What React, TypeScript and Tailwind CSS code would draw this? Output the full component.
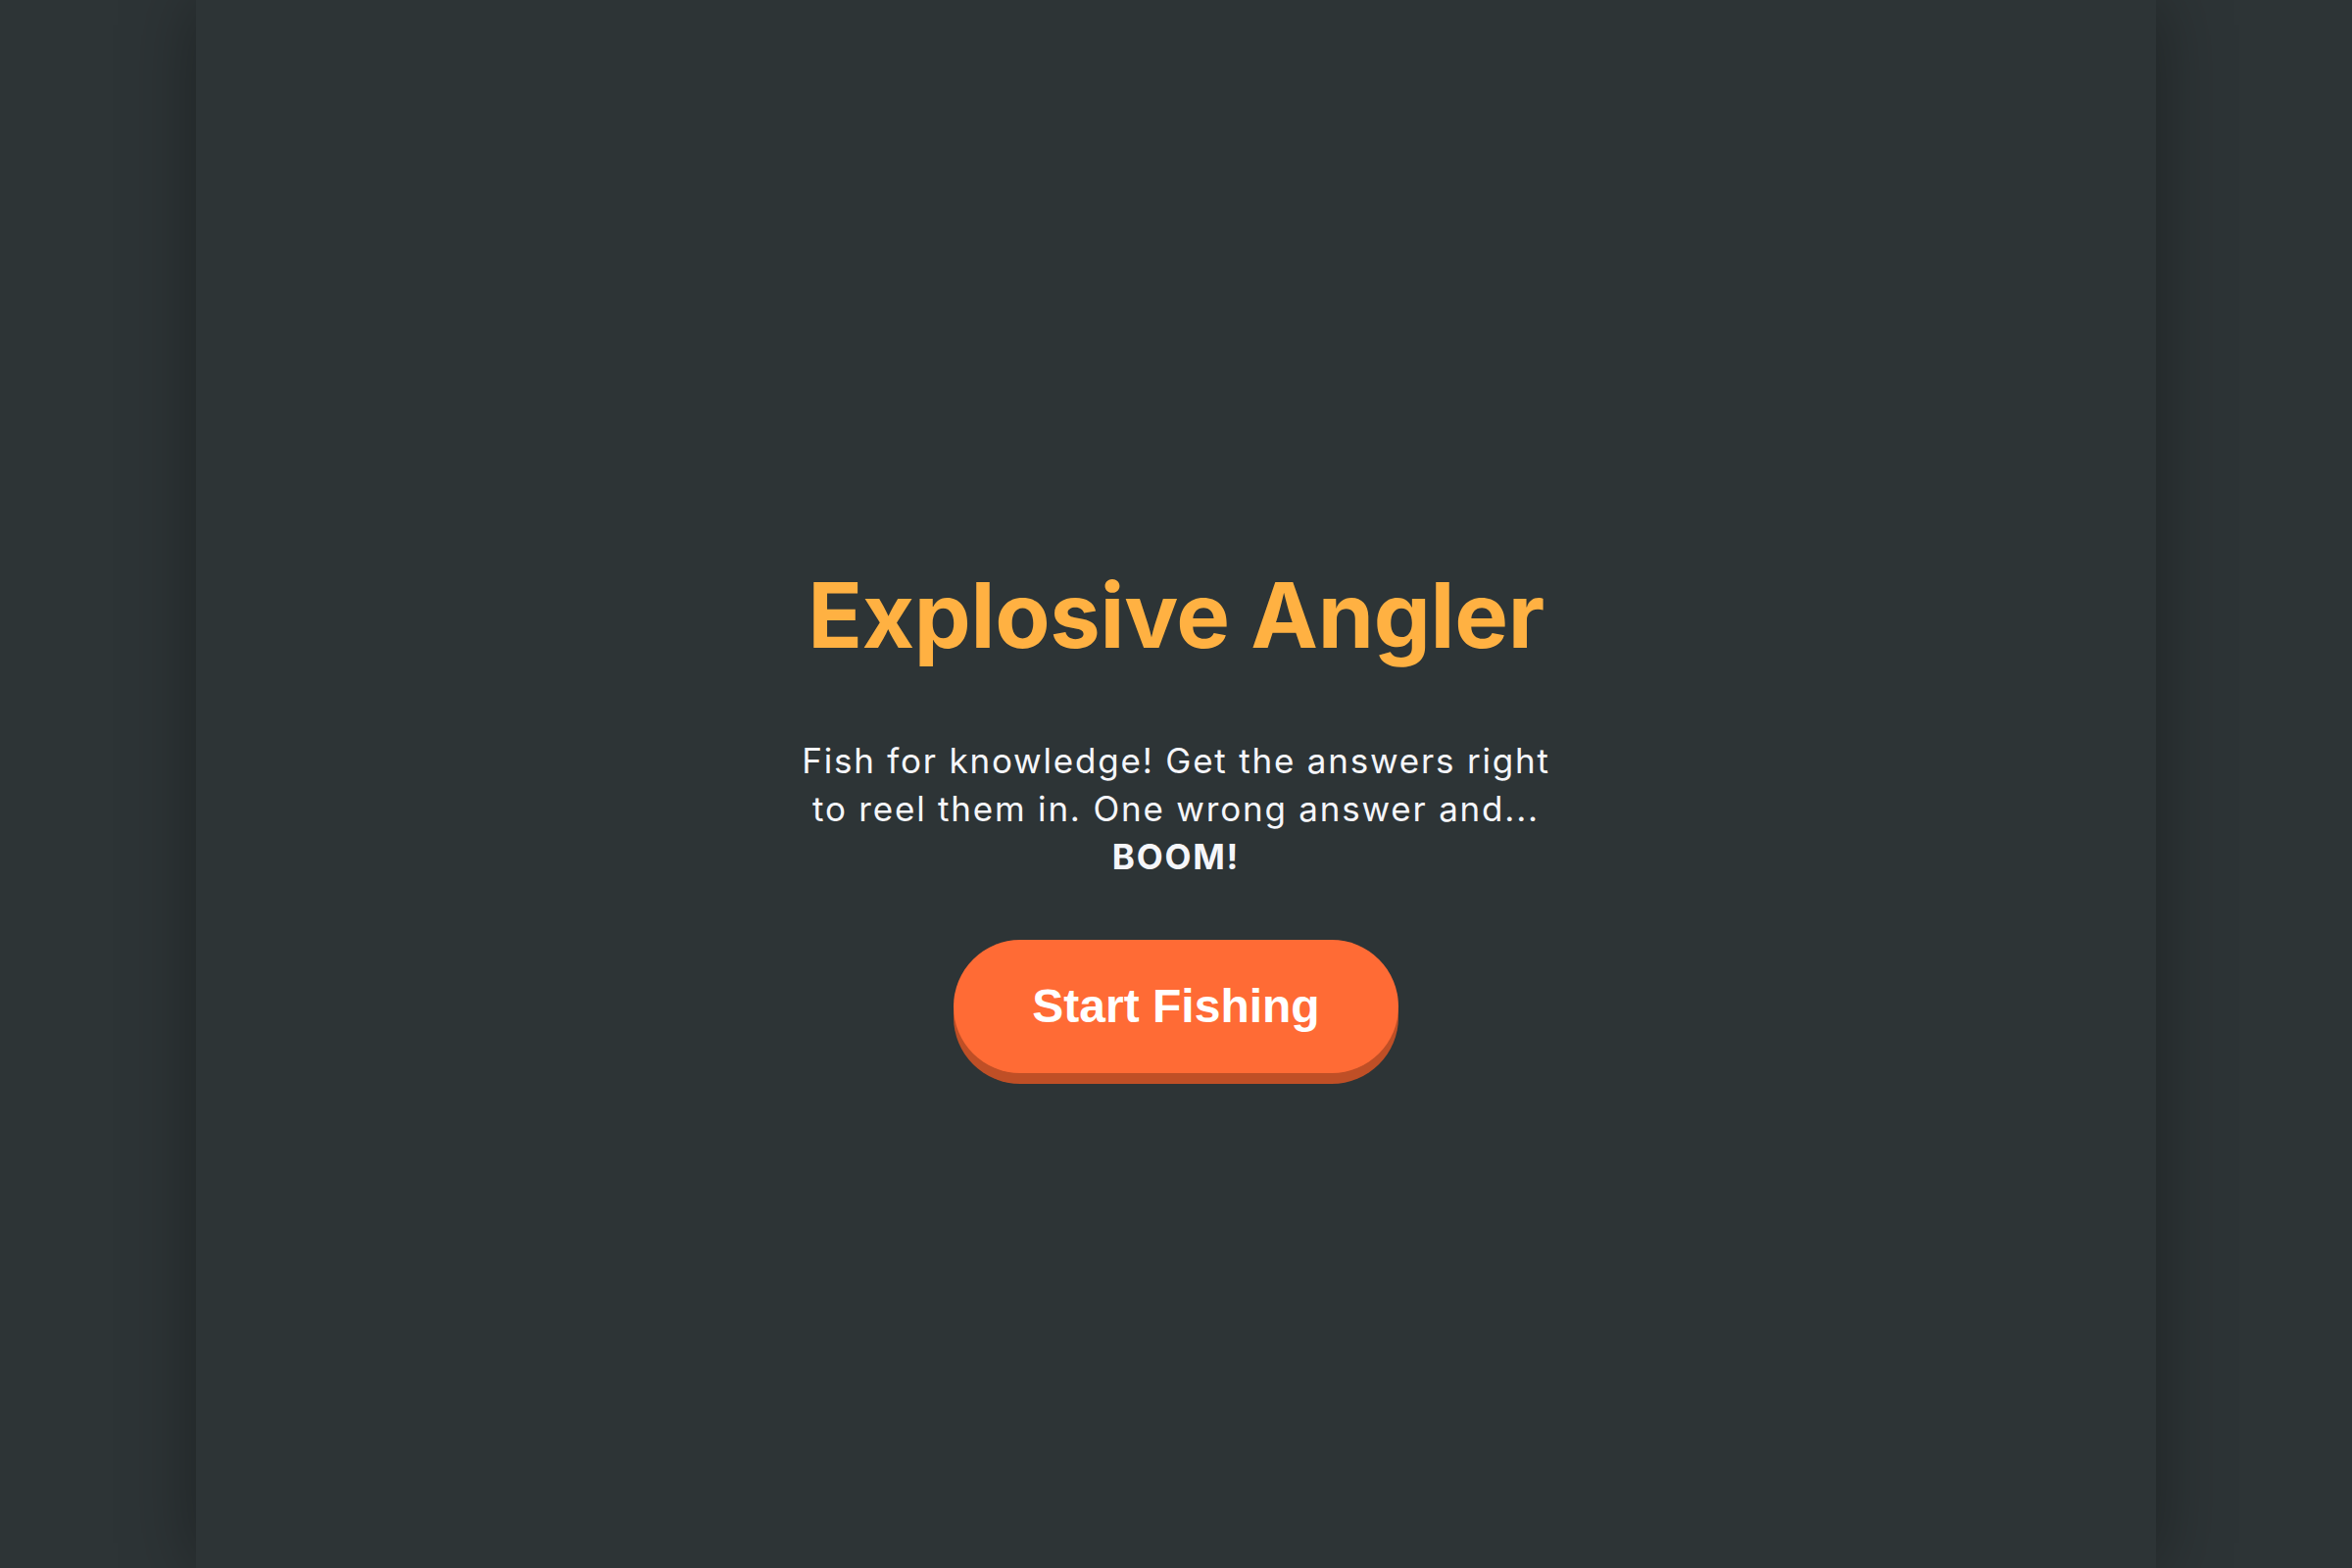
export default function App() {
  return (
    <div className="min-h-screen w-full bg-[#2d3436] flex justify-center">
      <main className="w-[2000px] min-h-screen bg-[#2d3436] shadow-[0_0_70px_rgba(0,0,0,0.35)] flex flex-col items-center pt-[570px]">
        <h1 className="text-[92px] leading-[115px] font-bold text-[#ffb142] tracking-[-0.3px] font-['Inter','Noto_Sans',sans-serif]">
          Explosive Angler
        </h1>
        <p className="mt-[67px] text-[35px] leading-[49px] tracking-[1.8px] text-[#f5f6fa] text-center font-['Inter','Noto_Sans',sans-serif]">
          <span className="block">Fish for knowledge! Get the answers right</span>
          <span className="block">to reel them in. One wrong answer and...</span>
          <strong className="block font-bold">BOOM!</strong>
        </p>
        <button className="mt-[60px] rounded-full bg-[#ff6b35] px-[80px] py-[40px] text-[48px] leading-[56px] font-bold text-white shadow-[0_11px_0_#bf4f26] font-['Liberation_Sans',Arial,sans-serif]">
          Start Fishing
        </button>
      </main>
    </div>
  )
}
